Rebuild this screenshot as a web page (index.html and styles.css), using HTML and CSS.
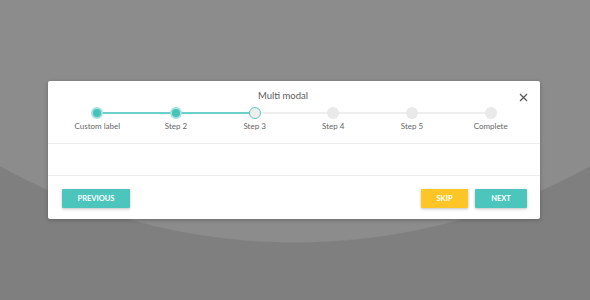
FILE: index.html
```html
<!DOCTYPE html>
<html>
<head>
<meta charset="utf-8">
<link rel="stylesheet" href="styles.css">
</head>
<body>
<div class="stage">
  <div class="modal">
    <button class="close" aria-label="Close">
      <svg width="9" height="9" viewBox="0 0 9 9"><path d="M1 1L8 8M8 1L1 8" stroke="#555" stroke-width="1.2" fill="none"/></svg>
    </button>
    <div class="header">
      <div class="title">Multi modal</div>
      <div class="stepper">
        <div class="step done"><span class="dot"></span><span class="label">Custom label</span></div>
        <div class="step done line-on"><span class="dot"></span><span class="label">Step 2</span></div>
        <div class="step current line-on"><span class="dot"></span><span class="label">Step 3</span></div>
        <div class="step"><span class="dot"></span><span class="label">Step 4</span></div>
        <div class="step"><span class="dot"></span><span class="label">Step 5</span></div>
        <div class="step"><span class="dot"></span><span class="label">Complete</span></div>
      </div>
    </div>
    <div class="body"></div>
    <div class="footer">
      <button class="btn teal prev">PREVIOUS</button>
      <div class="right">
        <button class="btn yellow skip">SKIP</button>
        <button class="btn teal next">NEXT</button>
      </div>
    </div>
  </div>
</div>
</body>
</html>
```

FILE: styles.css
```css
html, body {
  margin: 0;
  padding: 0;
  width: 590px;
  height: 300px;
  overflow: hidden;
}
body {
  background: radial-gradient(circle 610px at 295px -367px, #8c8c8c 99.8%, #7f7f7f 100%);
  font-family: Lato, "Open Sans", sans-serif;
}
.stage {
  padding: 81px 0 0 48px;
}
.modal {
  position: relative;
  width: 492px;
  height: 138px;
  background: #fff;
  border-radius: 2px;
  box-shadow: 0 1px 4px rgba(0,0,0,0.25);
  display: flex;
  flex-direction: column;
}
.close {
  position: absolute;
  top: 12px;
  right: 12px;
  width: 9px;
  height: 9px;
  padding: 0;
  border: 0;
  background: none;
  display: flex;
}
.header {
  padding: 9px 10px 0;
  height: 53px;
  border-bottom: 1px solid #ececec;
}
.title {
  text-align: center;
  font-size: 9.5px;
  line-height: 12px;
  color: #5a5a5a;
  padding-right: 22px;
}
.stepper {
  display: grid;
  grid-template-columns: repeat(6, 1fr);
  margin-top: 5px;
}
.step {
  position: relative;
  display: flex;
  flex-direction: column;
  align-items: center;
}
.step + .step::before {
  content: "";
  position: absolute;
  top: 5px;
  left: -50%;
  width: 100%;
  height: 2px;
  background: #eeeeee;
}
.step.line-on::before {
  background: #6ccfc8;
}
.dot {
  position: relative;
  z-index: 1;
  width: 12px;
  height: 12px;
  border-radius: 50%;
  box-sizing: border-box;
  background: #e9e9e9;
}
.step.done .dot {
  background: #47c3ba;
  border: 2px solid #a5e2dd;
}
.step.current .dot {
  background: #eeeeee;
  border: 1px solid #5ccac2;
}
.label {
  margin-top: 2px;
  font-size: 8px;
  line-height: 10px;
  color: #666;
  white-space: nowrap;
}
.body {
  height: 31px;
  border-bottom: 1px solid #ececec;
}
.footer {
  flex: 1;
  display: flex;
  justify-content: space-between;
  align-items: flex-start;
  padding: 13px 13px 0 14px;
}
.right {
  display: flex;
  gap: 7px;
}
.btn {
  height: 19px;
  border: 0;
  border-radius: 1px;
  padding: 0;
  color: #fff;
  font-family: Lato, "Open Sans", sans-serif;
  font-weight: 700;
  font-size: 7.5px;
  box-shadow: 0 1px 3px rgba(0,0,0,0.25);
}
.teal { background: #4cc5bd; }
.yellow { background: #fdc626; }
.prev { width: 68px; }
.skip { width: 47px; }
.next { width: 52px; }
```
